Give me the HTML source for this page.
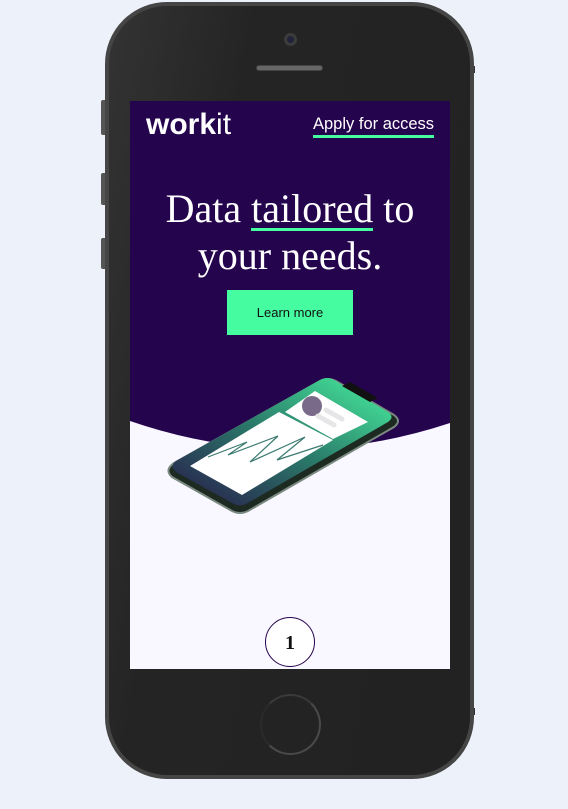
<!DOCTYPE html>
<html><head><meta charset="utf-8">
<style>
*{margin:0;padding:0;box-sizing:border-box}
html,body{width:568px;height:809px;background:#edf1fa;overflow:hidden;position:relative;font-family:"Liberation Sans",sans-serif}
.body{position:absolute;left:105px;top:2px;width:369px;height:777px;border-radius:62px;background:linear-gradient(100deg,#333 0%,#242424 30%,#222 100%);border:4px solid #454545}
.btn{position:absolute;left:101px;width:5px;background:#555;border-radius:2px 0 0 2px}
.cam{position:absolute;left:284px;top:33px;width:13px;height:13px;border-radius:50%;background:#3c3c3c}
.cam:after{content:"";position:absolute;left:3px;top:3px;width:7px;height:7px;border-radius:50%;background:#22223a}
.spk{position:absolute;left:256px;top:65px;width:67px;height:6px;border-radius:3px;background:#666;border:1px solid #444}
.screen{position:absolute;left:130px;top:101px;width:320px;height:568px;background:#f9f7ff;overflow:hidden}
.home{position:absolute;left:260px;top:694px;width:61px;height:61px;border-radius:50%;border:2px solid #4a4a4a;border-left-color:#2a2a2a;border-top-color:#3a3a3a}
</style></head><body>
<div class="btn" style="top:100px;height:35px"></div>
<div class="btn" style="top:173px;height:32px"></div>
<div class="btn" style="top:238px;height:31px"></div>
<div style="position:absolute;left:470px;top:66px;width:5px;height:7px;background:#333"></div>
<div style="position:absolute;left:470px;top:708px;width:5px;height:7px;background:#333"></div>
<div class="body"></div>
<div class="cam"></div>
<div class="spk"></div>
<div class="screen">
  <svg width="320" height="568" style="position:absolute;left:0;top:0">
    <path d="M0 0 H320 V322 Q160 375 0 320 Z" fill="#25044e"/>
    <defs><linearGradient id="g" x1="0" y1="1" x2="1" y2="0">
      <stop offset="0" stop-color="#28184a"/><stop offset="0.5" stop-color="#2a7a6a"/><stop offset="1" stop-color="#48f2a0"/></linearGradient></defs>
    <path d="M44 362 L190 280 Q198 276 206 280 L264 314 Q272 320 264 326 L118 410 Q110 414 102 410 L42 376 Q34 369 44 362 Z" fill="#1d2a22" stroke="#7a8a80" stroke-width="2"/>
    <path d="M46 360 L190 279 Q197 275 204 279 L258 311 Q265 316 258 321 L116 403 Q110 406 104 403 L46 371 Q39 365 46 360 Z" fill="url(#g)"/>
    <path d="M212 285 L240 301 L248 297 L220 281 Z" fill="#111"/>
    <path d="M60 365 L112 394 L203 339 L149 311 Z" fill="#fff"/>
    <path d="M155 311 L203 338 L238 321 L185 290 Z" fill="#fff"/>
    <circle cx="182" cy="305" r="10" fill="#7a6a8a"/>
    <path d="M196 309 L212 318 M188 315 L204 324" stroke="#e6e6e8" stroke-width="5" stroke-linecap="round"/>
    <path d="M78 356 L117 341 L98 354 L148 335 L120 361 L175 336 L147 359 L193 344" stroke="#3a7a70" stroke-width="1.2" fill="none"/>
    <circle cx="160" cy="541" r="24.5" fill="#fff" stroke="#25044e" stroke-width="1"/>
    <text x="160" y="548" text-anchor="middle" font-family="Liberation Serif,serif" font-weight="bold" font-size="20" fill="#111">1</text>
  </svg>
  <div style="position:absolute;left:16px;top:7px;color:#fff;font-size:30px;letter-spacing:0px"><b>work</b><span style="font-weight:300">it</span></div>
  <div style="position:absolute;left:183px;top:13px;color:#fff;font-size:16.5px;border-bottom:3px solid #46fca0;padding-bottom:1px;line-height:20px">Apply for access</div>
  <div style="position:absolute;left:0;top:84px;width:320px;text-align:center;color:#fff;font-family:'Liberation Serif',serif;font-size:40px;line-height:47px">Data <span style="border-bottom:3px solid #46fca0;line-height:38px;display:inline-block">tailored</span> to<br>your needs.</div>
  <div style="position:absolute;left:97px;top:189px;width:126px;height:45px;background:#46fca0;color:#111;font-size:13px;text-align:center;line-height:45px">Learn more</div>
</div>
<div class="home"></div>
</body></html>
